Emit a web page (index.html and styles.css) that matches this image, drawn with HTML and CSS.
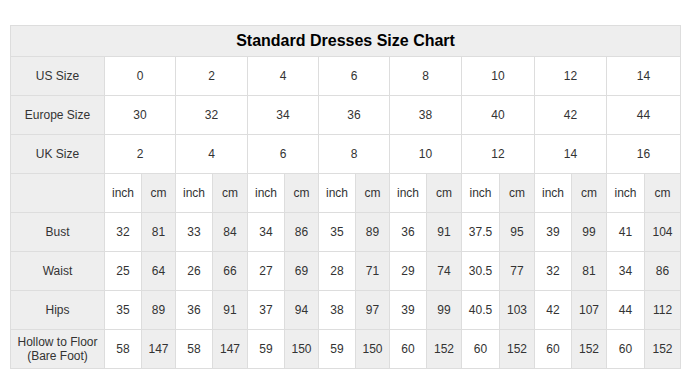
FILE: index.html
```html
<!DOCTYPE html>
<html lang="en">

<head>
    <meta charset="UTF-8">
    <meta name="viewport" content="width=device-width, initial-scale=1.0">
    <title>Standard Dresses Size Chart</title>
    <link rel="stylesheet" href="styles.css">
</head>

<body>
    <table class="size-chart">
        <colgroup>
            <col class="w94">
            <col class="w37"><col class="w34">
            <col class="w37"><col class="w35">
            <col class="w37"><col class="w34">
            <col class="w37"><col class="w34">
            <col class="w37"><col class="w35">
            <col class="w38"><col class="w35">
            <col class="w37"><col class="w35">
            <col class="w38"><col class="w36">
        </colgroup>
        <tr class="title-row">
            <th colspan="17">Standard Dresses Size Chart</th>
        </tr>
        <tr>
            <td class="label">US Size</td>
            <td colspan="2">0</td><td colspan="2">2</td><td colspan="2">4</td><td colspan="2">6</td>
            <td colspan="2">8</td><td colspan="2">10</td><td colspan="2">12</td><td colspan="2">14</td>
        </tr>
        <tr>
            <td class="label">Europe Size</td>
            <td colspan="2">30</td><td colspan="2">32</td><td colspan="2">34</td><td colspan="2">36</td>
            <td colspan="2">38</td><td colspan="2">40</td><td colspan="2">42</td><td colspan="2">44</td>
        </tr>
        <tr>
            <td class="label">UK Size</td>
            <td colspan="2">2</td><td colspan="2">4</td><td colspan="2">6</td><td colspan="2">8</td>
            <td colspan="2">10</td><td colspan="2">12</td><td colspan="2">14</td><td colspan="2">16</td>
        </tr>
        <tr>
            <td class="label"></td>
            <td>inch</td><td class="cm">cm</td><td>inch</td><td class="cm">cm</td>
            <td>inch</td><td class="cm">cm</td><td>inch</td><td class="cm">cm</td>
            <td>inch</td><td class="cm">cm</td><td>inch</td><td class="cm">cm</td>
            <td>inch</td><td class="cm">cm</td><td>inch</td><td class="cm">cm</td>
        </tr>
        <tr>
            <td class="label">Bust</td>
            <td>32</td><td class="cm">81</td><td>33</td><td class="cm">84</td>
            <td>34</td><td class="cm">86</td><td>35</td><td class="cm">89</td>
            <td>36</td><td class="cm">91</td><td>37.5</td><td class="cm">95</td>
            <td>39</td><td class="cm">99</td><td>41</td><td class="cm">104</td>
        </tr>
        <tr>
            <td class="label">Waist</td>
            <td>25</td><td class="cm">64</td><td>26</td><td class="cm">66</td>
            <td>27</td><td class="cm">69</td><td>28</td><td class="cm">71</td>
            <td>29</td><td class="cm">74</td><td>30.5</td><td class="cm">77</td>
            <td>32</td><td class="cm">81</td><td>34</td><td class="cm">86</td>
        </tr>
        <tr>
            <td class="label">Hips</td>
            <td>35</td><td class="cm">89</td><td>36</td><td class="cm">91</td>
            <td>37</td><td class="cm">94</td><td>38</td><td class="cm">97</td>
            <td>39</td><td class="cm">99</td><td>40.5</td><td class="cm">103</td>
            <td>42</td><td class="cm">107</td><td>44</td><td class="cm">112</td>
        </tr>
        <tr>
            <td class="label">Hollow to Floor<br>(Bare Foot)</td>
            <td>58</td><td class="cm">147</td><td>58</td><td class="cm">147</td>
            <td>59</td><td class="cm">150</td><td>59</td><td class="cm">150</td>
            <td>60</td><td class="cm">152</td><td>60</td><td class="cm">152</td>
            <td>60</td><td class="cm">152</td><td>60</td><td class="cm">152</td>
        </tr>
    </table>
</body>

</html>
```

FILE: styles.css
```css
body {
    margin: 0;
    padding: 25px 0 0 10px;
    background-color: #fff;
    font-family: "Liberation Sans", Arial, Helvetica, sans-serif;
}

.size-chart {
    table-layout: fixed;
    border-collapse: collapse;
    width: 671px;
    color: #333;
    font-size: 12px;
}

/* column widths, measured from the chart */
.w94 { width: 94px; }
.w34 { width: 34px; }
.w35 { width: 35px; }
.w36 { width: 36px; }
.w37 { width: 37px; }
.w38 { width: 38px; }

.size-chart th,
.size-chart td {
    border: 1px solid #ddd;
    padding: 0;
    text-align: center;
    vertical-align: middle;
    line-height: 14px;
}

.size-chart td {
    height: 38px;
}

.title-row th {
    height: 30px;
    background-color: #eee;
    color: #000;
    font-size: 16px;
    font-weight: bold;
}

/* label column and cm columns are shaded */
.size-chart .label,
.size-chart .cm {
    background-color: #eee;
}
```
